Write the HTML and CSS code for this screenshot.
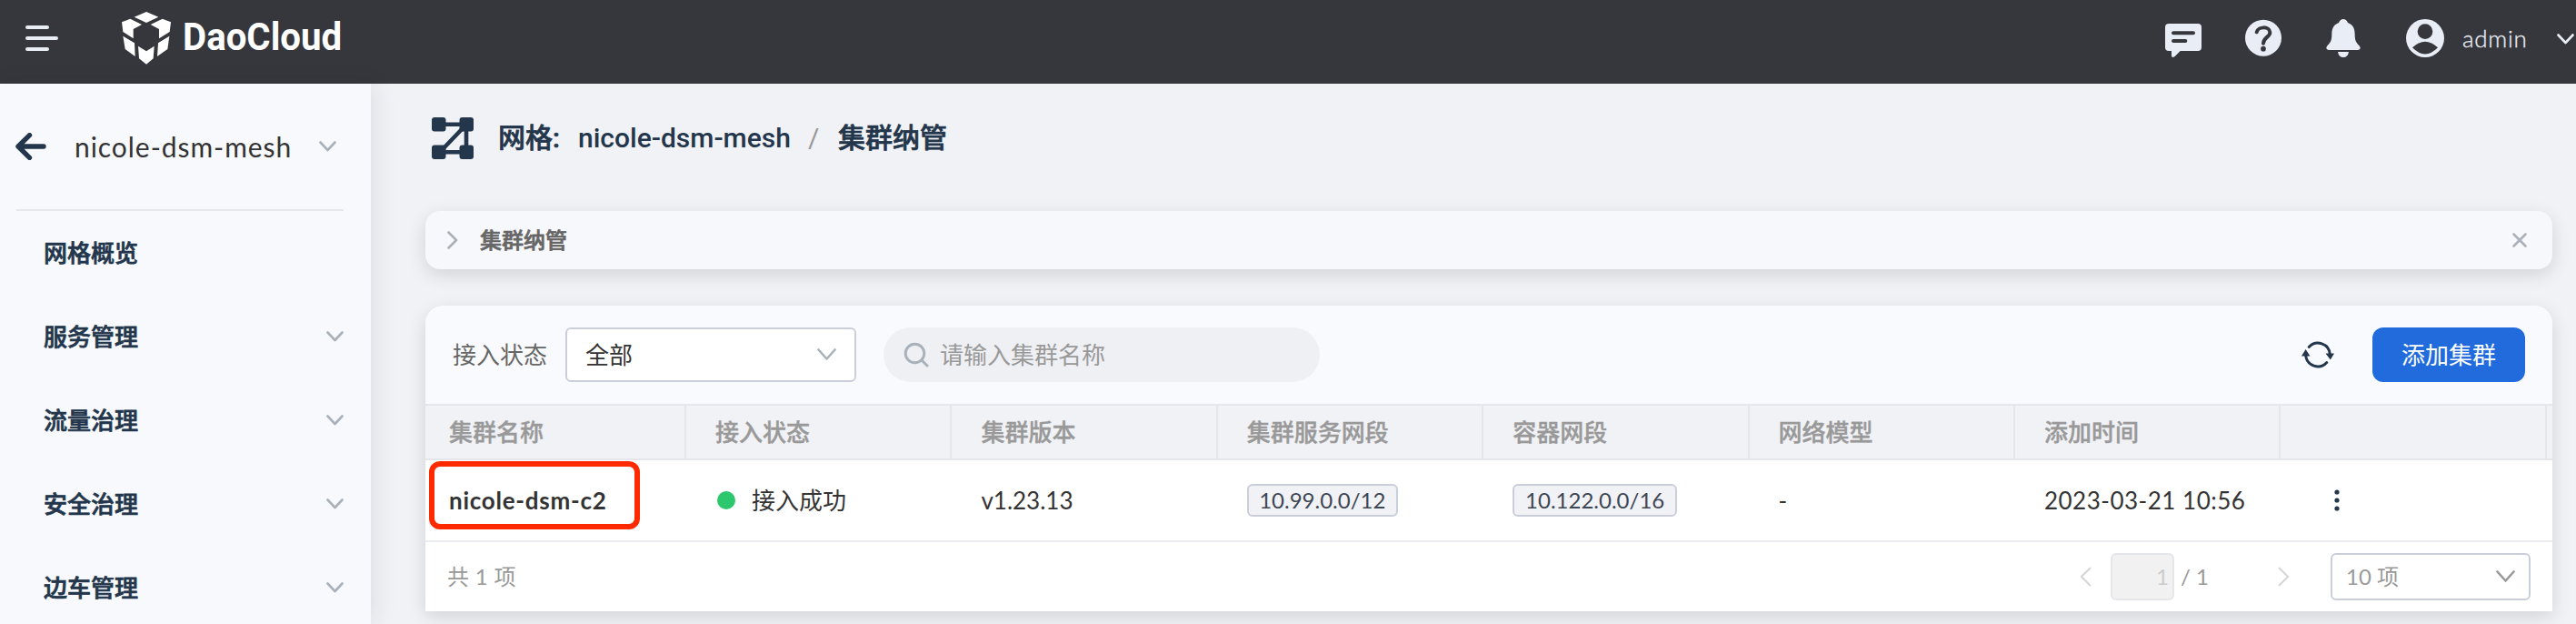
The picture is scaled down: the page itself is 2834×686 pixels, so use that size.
FILE: index.html
```
<!DOCTYPE html>
<html lang="zh-CN">
<head>
<meta charset="utf-8">
<title>DaoCloud</title>
<link rel="stylesheet" href="styles.css">
</head>
<body>
<header class="topbar">
  <svg class="burger" width="36" height="28" viewBox="0 0 36 28"><path d="M2 2H24M2 14H34M2 26H24"/></svg>
  <svg class="logo" width="54" height="58" viewBox="404 38 162 174"><path d="M485 38L525 55L485 74L445 55ZM404 72L432 61L470 80L442 95V126L408 104ZM566 72L538 61L499 80L527 95V126L562 104ZM408 118L446 141L448 185L415 161ZM561 118L524 141L521 185L555 161ZM458 151L485 168L511 151L508 192L485 211L461 192Z"/></svg>
  <span class="brand">DaoCloud</span>
  <nav class="tools">
    <svg class="tool" width="40" height="92" viewBox="126 0 120 276"><path d="M138 78H234Q246 78 246 90V156Q246 168 234 168H176L158 186Q147 193 147 182V168H138Q126 168 126 156V90Q126 78 138 78Z"/><path class="cut" d="M153 109H219M153 135H193"/></svg>
    <svg class="tool" width="40" height="92" viewBox="390 0 120 276"><circle cx="450" cy="125" r="60"/><path class="cut" d="M428 106C432 87 471 85 472 107C472 122 450 124 450 143"/><circle class="hole" cx="450" cy="161" r="8.5"/></svg>
    <svg class="tool" width="38" height="92" viewBox="657 0 114 276"><path d="M714 63Q724 63 729 75C746 82 752 94 752 112C752 132 755 140 767 151Q775 164 762 165H666Q653 164 661 151C673 140 676 132 676 112C676 94 682 82 699 75Q704 63 714 63ZM696 171H732Q729 189 714 189Q699 189 696 171Z"/></svg>
    <svg class="tool" width="42" height="92" viewBox="921 0 126 276"><circle cx="984" cy="126" r="63"/><circle class="hole" cx="984" cy="104" r="25"/><path class="hole" d="M942 157Q984 118 1026 157Q984 200 942 157Z"/></svg>
    <span class="user">admin</span>
    <svg class="line-icon light" width="19" height="12" viewBox="0 0 19 12"><path d="M1.5 1.5L9.5 10L17.5 1.5"/></svg>
  </nav>
</header>
<div class="body">
  <aside class="sidebar">
    <div class="mesh">
      <svg class="back" width="34" height="30" viewBox="0 0 34 30"><path d="M15.5 2.7L3 15L15.5 27.3M4 15H31"/></svg>
      <span class="mesh-name">nicole-dsm-mesh</span>
      <svg class="line-icon" width="19" height="12" viewBox="0 0 19 12"><path d="M1.5 1.5L9.5 10L17.5 1.5"/></svg>
    </div>
    <ul class="menu">
      <li>网格概览</li>
      <li>服务管理<svg class="line-icon" width="19" height="12" viewBox="0 0 19 12"><path d="M1.5 1.5L9.5 10L17.5 1.5"/></svg></li>
      <li>流量治理<svg class="line-icon" width="19" height="12" viewBox="0 0 19 12"><path d="M1.5 1.5L9.5 10L17.5 1.5"/></svg></li>
      <li>安全治理<svg class="line-icon" width="19" height="12" viewBox="0 0 19 12"><path d="M1.5 1.5L9.5 10L17.5 1.5"/></svg></li>
      <li>边车管理<svg class="line-icon" width="19" height="12" viewBox="0 0 19 12"><path d="M1.5 1.5L9.5 10L17.5 1.5"/></svg></li>
    </ul>
  </aside>
  <main class="main">
    <div class="crumbs">
      <svg class="mesh-icon" width="46" height="46" viewBox="0 0 46 46"><rect width="15.5" height="15.5" rx="3"/><rect x="30.5" width="15.5" height="15.5" rx="3"/><rect y="30.5" width="15.5" height="15.5" rx="3"/><rect x="30.5" y="30.5" width="15.5" height="15.5" rx="3"/><path d="M12 7.8H34M12 38.2H34M38 12V34M36 10L12 35"/></svg>
      <span class="crumb-label medium">网格:</span>
      <span class="crumb-mesh">nicole-dsm-mesh</span>
      <span class="slash">/</span>
      <span class="medium">集群纳管</span>
    </div>
    <section class="notice">
      <svg class="line-icon" width="12" height="20" viewBox="0 0 12 20"><path d="M1.5 1.5L10 10L1.5 18.5"/></svg>
      <span class="medium">集群纳管</span>
      <svg class="line-icon close" width="16" height="16" viewBox="0 0 16 16"><path d="M1.5 1.5L14.5 14.5M14.5 1.5L1.5 14.5"/></svg>
    </section>
    <section class="panel">
      <div class="toolbar">
        <span class="label">接入状态</span>
        <div class="select">全部<svg class="line-icon" width="21" height="14" viewBox="0 0 21 14"><path d="M1.5 1.5L10.5 11.5L19.5 1.5"/></svg></div>
        <div class="search"><svg class="line-icon lens" width="28" height="28" viewBox="0 0 28 28"><circle cx="12.5" cy="12.5" r="10.3"/><path d="M20 20L26 26"/></svg>请输入集群名称</div>
        <svg class="refresh" width="36" height="32" viewBox="0 0 36 32"><path class="arc" d="M8.2 7.5A13.3 13.3 0 0 1 31.3 15.5M27.8 24.5A13.3 13.3 0 0 1 4.7 16.5"/><path d="M26.5 14.5H36L31.8 21.5ZM0 17.5H9.5L4.6 10Z"/></svg>
        <button class="add">添加集群</button>
      </div>
      <div class="grid head">
        <div>集群名称</div><div>接入状态</div><div>集群版本</div><div>集群服务网段</div><div>容器网段</div><div>网络模型</div><div>添加时间</div><div></div>
      </div>
      <div class="grid row">
        <div class="name-cell"><b class="name">nicole-dsm-c2</b><i class="mark"></i></div>
        <div><i class="dot"></i>接入成功</div>
        <div><span class="version">v1.23.13</span></div>
        <div><span class="tag tag-service">10.99.0.0/12</span></div>
        <div><span class="tag tag-pod">10.122.0.0/16</span></div>
        <div>-</div>
        <div><span class="date">2023-03-21 10:56</span></div>
        <div class="more"><svg width="6" height="24" viewBox="0 0 6 24"><circle cx="3" cy="3" r="2.6"/><circle cx="3" cy="12" r="2.6"/><circle cx="3" cy="21" r="2.6"/></svg></div>
      </div>
      <div class="footer">
        <span class="total">共 1 项</span>
        <svg class="line-icon faint" width="13" height="22" viewBox="0 0 13 22"><path d="M11.5 1.5L1.8 11L11.5 20.5"/></svg>
        <span class="page">1</span>
        <span class="pages">/ 1</span>
        <svg class="line-icon faint" width="13" height="22" viewBox="0 0 13 22"><path d="M1.5 1.5L11.2 11L1.5 20.5"/></svg>
        <div class="size">10 项<svg class="line-icon gray" width="21" height="14" viewBox="0 0 21 14"><path d="M1.5 1.5L10.5 11.5L19.5 1.5"/></svg></div>
      </div>
    </section>
  </main>
</div>
</body>
</html>
```
FILE: styles.css
```
* { box-sizing: border-box; }
body { margin: 0; height: 686px; overflow: hidden; background: #f1f2f6; color: #333; font: 26px/1 Lato, "Noto Sans CJK SC", sans-serif; white-space: nowrap; }
svg { display: block; flex: none; }
.medium, .menu li { -webkit-text-stroke: .7px currentColor; }
.topbar { display: flex; align-items: center; height: 92px; padding: 0 2px 0 28px; background: #36373c; }
.burger { fill: none; stroke: #e8eef4; stroke-width: 4; stroke-linecap: round; margin-top: -8px; }
.logo { fill: #fff; margin: -9px 13px 0 70px; }
.brand { color: #fff; font: 700 43px/1 Roboto, sans-serif; transform: scaleX(.935); transform-origin: 0 50%; margin-top: -12px; }
.tools { display: flex; align-items: center; margin-left: auto; }
.tool { fill: #e9edf5; }
.tool + .tool { margin-left: 48px; }
.tool:nth-of-type(3) { margin-left: 49px; }
.tool:nth-of-type(4) { margin-left: 50px; }
.cut { fill: none; stroke: #36373c; stroke-width: 12; stroke-linecap: round; }
.hole { fill: #36373c; }
.user { width: 70px; margin: -9px 34px 0 20px; color: #e9edf5; font-size: 26px; font-weight: 300; letter-spacing: .7px; -webkit-text-stroke: .3px currentColor; }
.line-icon { fill: none; stroke: #a9b1ba; stroke-width: 2.6; stroke-linecap: round; stroke-linejoin: round; }
.light { stroke: #e9edf5; margin-top: -7px; }
.faint { stroke: #d5d5d7; stroke-width: 2; }
.gray { stroke: #999; }
.body { display: flex; height: 594px; }
.sidebar { width: 408px; background: #f7f9fd; box-shadow: 4px 0 24px rgba(30, 34, 45, .09); }
.mesh { display: flex; align-items: center; height: 140px; margin: 0 30px 0 18px; border-bottom: 2px solid #e5e7eb; }
.back { fill: none; stroke: #23364b; stroke-width: 5.4; stroke-linecap: round; stroke-linejoin: round; margin-left: -1px; }
.mesh-name { width: 239px; margin-left: 31px; font-size: 30px; letter-spacing: .95px; }
.mesh .line-icon { margin-left: 30px; }
.menu { list-style: none; margin: 0; padding: 0 30px 0 48px; }
.menu li { display: flex; align-items: center; justify-content: space-between; height: 92px; color: #23364b; font-weight: 500; }
.main { flex: 1; padding: 0 26px 14px 60px; }
.crumbs { display: flex; align-items: center; height: 120px; margin-bottom: 20px; padding-left: 7px; color: #23364b; font: 500 30px/1 Roboto, "Noto Sans CJK SC", sans-serif; }
.mesh-icon { fill: #23364b; stroke: none; margin: 0 27px 0 0; }
.mesh-icon path { fill: none; stroke: #23364b; stroke-width: 4.6; }
.crumb-label { width: 88px; }
.crumb-mesh { width: 253px; }
.slash { width: 33px; color: #999; font-weight: 400; }
.notice { display: flex; align-items: center; height: 64px; margin-bottom: 40px; padding: 0 28px 0 24px; border-radius: 16px; background: #f7f8fb; box-shadow: 0 6px 20px rgba(0, 0, 0, .13); color: #666; font-size: 24px; font-weight: 500; }
.notice span { margin-left: 24px; }
.close { margin-left: auto; }
.panel { height: 336px; border-radius: 20px 20px 0 0; background: #fff; box-shadow: 0 6px 20px rgba(0, 0, 0, .13); }
.toolbar { display: flex; align-items: center; height: 108px; padding: 0 30px; border-radius: 20px 20px 0 0; background: #f9fafd; }
.label { color: #666; margin-right: 20px; }
.select { display: flex; align-items: center; justify-content: space-between; width: 320px; height: 60px; padding: 0 20px; border: 2px solid #c9ced8; border-radius: 6px; background: #fff; }
.search { display: flex; align-items: center; width: 480px; height: 60px; margin-left: 30px; padding-left: 22px; border-radius: 30px; background: #eff0f4; color: #999; }
.lens { margin-right: 12px; stroke-width: 3; }
.refresh { margin-left: auto; fill: #23364b; }
.arc { fill: none; stroke: #23364b; stroke-width: 3; stroke-linecap: round; }
.add { width: 168px; height: 60px; margin-left: 42px; padding: 0; border: 0; border-radius: 12px; background: #216bdc; color: #fff; font: inherit; }
.grid { display: grid; grid-template-columns: 287px repeat(7, 292.4px) 1fr; }
.grid > div { display: flex; align-items: center; padding-left: 32px; }
.grid > div:first-child { padding-left: 26px; }
.head { height: 62px; border: solid #e4e6ec; border-width: 2px 0; background: #f1f2f6; color: #999; font-weight: 500; -webkit-text-stroke: .4px currentColor; }
.head > div { border-right: 2px solid #e4e6ec; }
.row { height: 90px; border-bottom: 2px solid #ebedf2; }
.name-cell { position: relative; }
.name { letter-spacing: .75px; }
.date { letter-spacing: .5px; }
.mark { position: absolute; left: 4px; top: 1px; width: 232px; height: 75px; border: 6px solid #ff2a00; border-radius: 12px; }
.dot { width: 20px; height: 20px; margin: 0 18px 0 2px; border-radius: 50%; background: #2dc76d; }
.tag { display: flex; align-items: center; justify-content: center; height: 36px; border: 2px solid #c9ced8; border-radius: 6px; background: #f1f2f6; font-size: 24px; color: #3d4654; }
.tag-service { width: 166px; }
.tag-pod { width: 181px; }
.row .more { padding-left: 59px; fill: #23364b; }
.footer { display: flex; align-items: center; height: 76px; padding: 0 24px; color: #999; font-size: 24px; }
.total { margin-right: auto; letter-spacing: .3px; }
.page { display: flex; align-items: center; justify-content: flex-end; width: 70px; height: 52px; margin: 0 7px 0 21px; padding-right: 4px; border: 2px solid #e5e6ea; border-radius: 6px; background: #f1f1f2; color: #ccc; }
.pages { width: 107px; }
.size { display: flex; align-items: center; justify-content: space-between; width: 220px; height: 52px; margin-left: 45px; padding: 0 15px; border: 2px solid #c9ced8; border-radius: 6px; }
```
